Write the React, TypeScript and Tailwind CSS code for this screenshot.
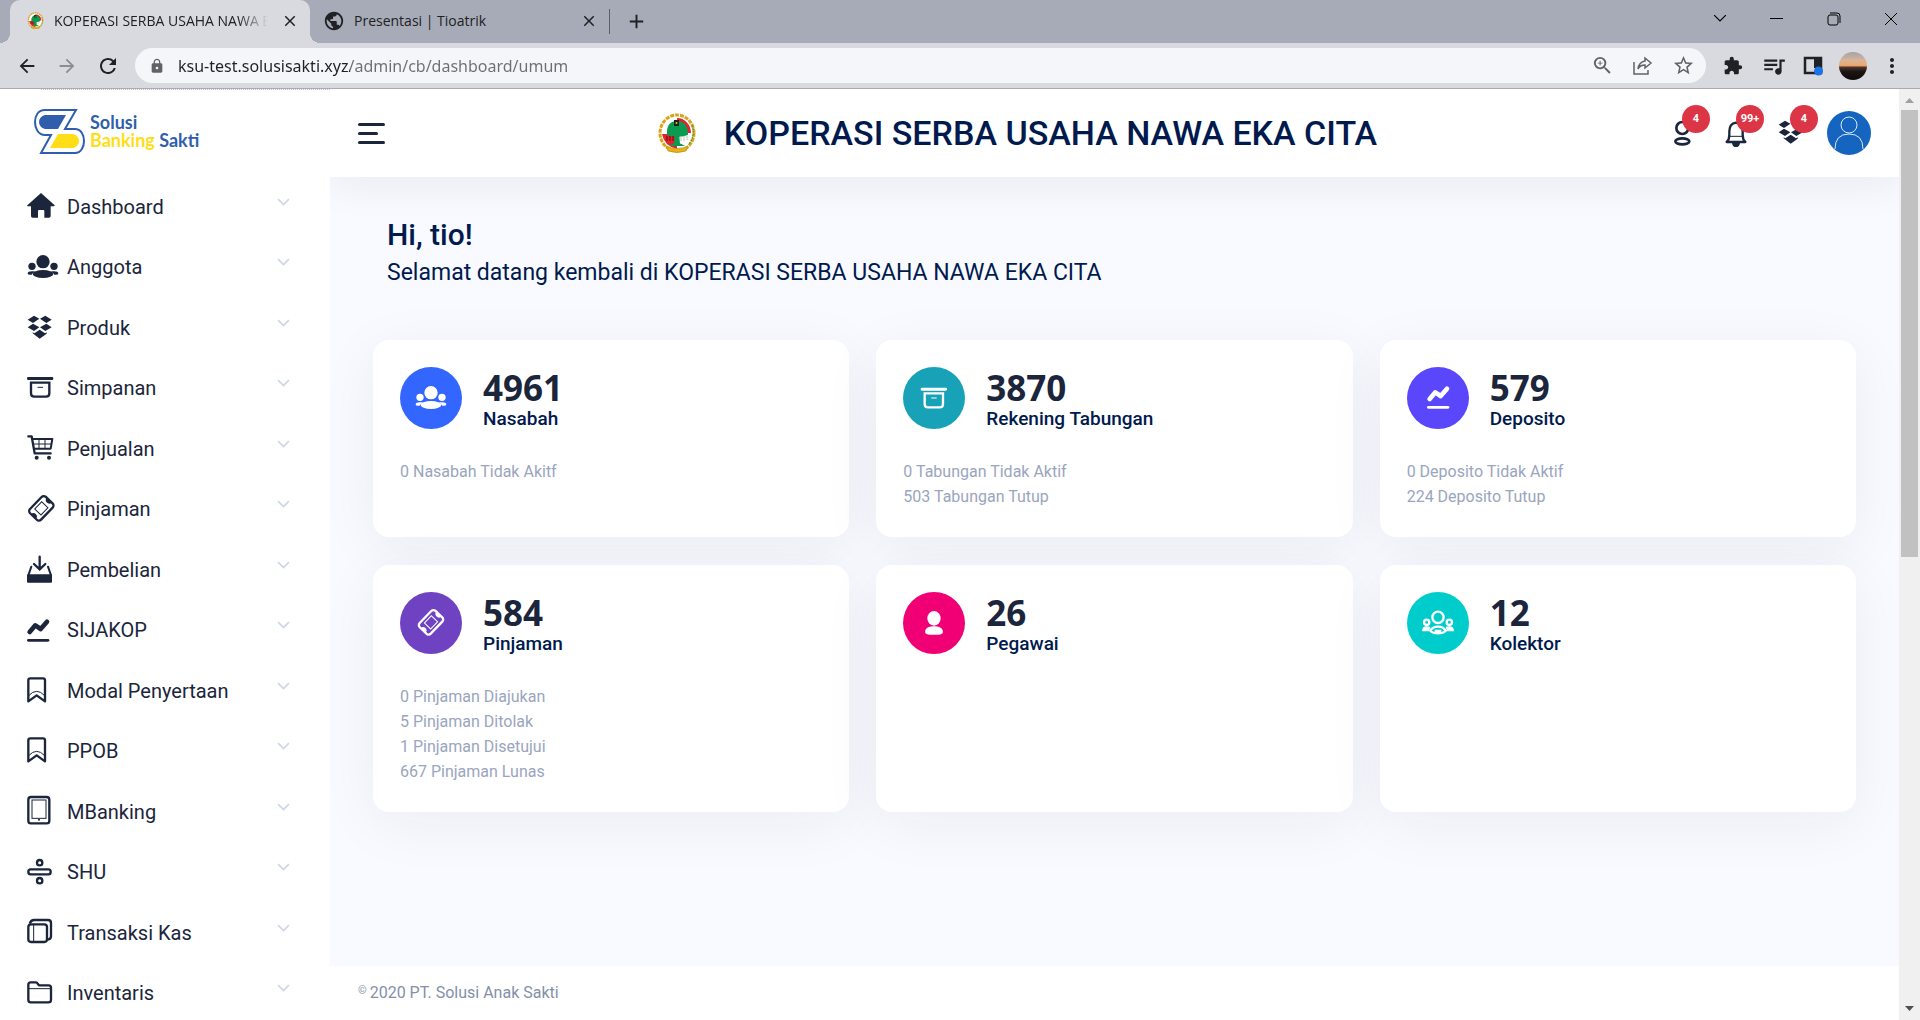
import React from 'react';
import type { ReactNode } from 'react';
import {
  MdArrowBack, MdArrowForward, MdRefresh, MdLock, MdZoomIn, MdStarBorder, MdExtension,
  MdQueueMusic, MdMoreVert, MdPublic, MdClose, MdAdd,
} from 'react-icons/md';

/* ---------- Icon shapes, drawn around a horizontal axis at y = 0 ---------- */

const home = (
  <path fill="currentColor" d="M42-42 83-5Q84-2 80-2H71V27Q71 32 66 32H52V12Q52 9 49 9H36Q33 9 33 12V32H17Q12 32 12 27V-2H3Q-1-2 1-5Z" />
);
const people = (
  <g fill="currentColor">
    <circle cx="48" cy="-16" r="20" />
    <circle cx="15" cy="-2" r="11" />
    <circle cx="81" cy="-2" r="11" />
    <ellipse cx="48" cy="21" rx="31" ry="12" />
    <path d="M2 20Q2 13 15 13Q22 12 26 14Q16 17 14 23Q2 24 2 20ZM94 20Q94 13 81 13Q74 12 70 14Q80 17 82 23Q94 24 94 20Z" />
  </g>
);
const boxes = (
  <path fill="currentColor" d="M2-25 21-37 37-28 18-15ZM39-28 55-37 74-25 58-15ZM2-2 18-13 37-2 21 9ZM39-2 58-13 74-2 55 9ZM17 16V13L22 16 38 5 54 16 59 13V17L38 32Z" />
);
const archive = (
  <g fill="none" stroke="currentColor">
    <rect x="0" y="-33" width="79" height="9" rx="4" fill="currentColor" stroke="none" />
    <path strokeWidth="7" d="M12-16H67V16Q67 26 57 26H22Q12 26 12 16Z" />
    <path strokeWidth="3" strokeLinecap="round" d="M33-2H47" />
  </g>
);
const cart = (
  <g fill="none" stroke="currentColor" strokeLinecap="round" strokeLinejoin="round">
    <path strokeWidth="7" d="M4-38H14L23 13H71" />
    <path strokeWidth="6" d="M16-30H76L71-1H21" />
    <path strokeWidth="3" d="M20-15H72M36-28V-3M54-28V-3" />
    <circle cx="29" cy="26" r="6" fill="currentColor" stroke="none" />
    <circle cx="66" cy="26" r="6" fill="currentColor" stroke="none" />
  </g>
);
const ticket = (
  <g fill="none" stroke="currentColor" transform="rotate(-46 43 -2)">
    <rect x="9" y="-25" width="68" height="46" rx="9" strokeWidth="7" />
    <rect x="28" y="-15" width="30" height="26" strokeWidth="3" />
    <path fill="currentColor" stroke="none" d="M9-12A10 10 0 0 1 9 8ZM77-12A10 10 0 0 0 77 8Z" />
  </g>
);
const inbox = (
  <g fill="none" stroke="currentColor" strokeLinecap="round">
    <path strokeWidth="7" d="M38-40V-4M21-18 38-2 55-18" />
    <path strokeWidth="6" d="M13-10 4 16M63-10 72 16" />
    <rect x="0" y="13" width="75" height="25" rx="3" fill="currentColor" stroke="none" />
  </g>
);
const trend = (
  <g fill="none" stroke="currentColor" strokeLinecap="round" strokeLinejoin="round">
    <path strokeWidth="14" d="M8 6 25-14 41-3 60-25" />
    <path strokeWidth="8" d="M4 31H63" />
  </g>
);
const bookmark = (
  <g fill="none" stroke="currentColor" strokeLinejoin="round">
    <path strokeWidth="7" d="M4 31V-32Q4-38 10-38H48Q54-38 54-32V31L29 13Z" />
    <path strokeWidth="3" d="M5 14Q29-12 53 14" />
  </g>
);
const tablet = (
  <g fill="none" stroke="currentColor">
    <rect x="4" y="-45" width="63" height="79" rx="8" strokeWidth="7" />
    <rect x="15" y="-36" width="42" height="55" strokeWidth="3" />
    <circle cx="36" cy="23" r="3" fill="currentColor" stroke="none" />
  </g>
);
const divide = (
  <g fill="none" stroke="currentColor" strokeWidth="7">
    <circle cx="38" cy="-28" r="8" />
    <circle cx="38" cy="26" r="8" />
    <rect x="4" y="-8" width="67" height="15" rx="7" />
  </g>
);
const notebook = (
  <g fill="none" stroke="currentColor" strokeWidth="7">
    <rect x="4" y="-26" width="56" height="53" rx="8" />
    <path d="M8-28Q12-39 21-39H63Q72-39 72-30V10Q72 19 62 20" />
    <path strokeWidth="3" d="M20-24V24" />
  </g>
);
const folder = (
  <g fill="none" stroke="currentColor" strokeLinejoin="round">
    <path strokeWidth="7" d="M4-25Q4-32 11-32H27Q30-32 32-28L36-23H65Q72-23 72-16V20Q72 28 64 28H12Q4 28 4 20Z" />
    <path strokeWidth="3" d="M5-13H71" />
  </g>
);
const person = (
  <g fill="currentColor">
    <ellipse cx="24" cy="-16" rx="20" ry="22" />
    <path d="M-2 20Q2 8 24 8Q46 8 50 20Q54 33 38 33H10Q-6 33-2 20Z" />
  </g>
);
const personOutline = (
  <g fill="none" stroke="currentColor" strokeWidth="8">
    <circle cx="25" cy="-15" r="18" />
    <ellipse cx="25" cy="25" rx="21" ry="9" />
  </g>
);
const peopleOutline = (
  <g fill="none" stroke="currentColor" strokeWidth="7">
    <circle cx="48" cy="-17" r="17" />
    <circle cx="14" cy="-2" r="8" />
    <circle cx="82" cy="-2" r="8" />
    <path d="M25 23Q32 11 48 11Q64 11 71 23Q64 31 48 31Q32 31 25 23ZM38 24H58" />
    <path d="M24 15Q4 10 4 21H22M72 15Q92 10 92 21H74" />
  </g>
);
const bell = (
  <g fill="none" stroke="currentColor" strokeLinejoin="round">
    <path strokeWidth="7" d="M4 27Q12 20 12 5V-5Q12-28 32-31Q52-28 52-5V5Q52 20 60 27Z" />
    <path strokeWidth="3" d="M12 10H52" />
    <path strokeWidth="4" fill="currentColor" d="M22 30Q24 40 32 40Q40 40 42 30Z" />
  </g>
);

const Glyph = ({ children, cx = 48, cy = 0 }: { children: ReactNode; cx?: number; cy?: number }) => (
  <svg viewBox={`${cx - 48} ${cy - 48} 96 96`} className="size-8 shrink-0 overflow-visible" aria-hidden="true">
    {children}
  </svg>
);

const Chevron = ({ className }: { className: string }) => (
  <svg viewBox="0 0 12 8" className={className} fill="none" stroke="currentColor" aria-hidden="true">
    <path d="M1 1l5 5 5-5" />
  </svg>
);

const Emblem = ({ className }: { className: string }) => (
  <svg viewBox="0 0 38 40" className={className} aria-hidden="true">
    <ellipse cx="19" cy="20" rx="17" ry="18" fill="#fff" stroke="#d9a520" strokeWidth="3" strokeDasharray="4 1" />
    <path d="M19 5A14 15 0 0 1 33 20H19Z" fill="#e0242b" />
    <path d="M4 21H19V36Q6 33 4 21Z" fill="#e0242b" />
    <path d="M9 22Q8 8 19 8T30 22Q24 24 19 24T9 22Z" fill="#0a9b50" />
    <path d="M9 23v5M12 23v5M15 23v5" stroke="#a5141c" strokeWidth="2" />
    <path d="M23 23v5M26 23v5M29 23v4" stroke="#b9c4bd" />
    <path d="M17 20h4l1 11h-6z" fill="#0a9b50" />
    <path d="M11 33q8-6 16 0z" fill="#0a9b50" />
    <rect x="16" y="7" width="5" height="6" fill="#16241c" />
    <circle cx="18.500" cy="10" r="1" fill="#f2c317" />
    <path d="M8 33q11 5 22 0l-2 5q-9 3-18 0z" fill="#e3b21c" stroke="#b98a10" strokeWidth=".6" />
    <path d="M34 12q4 10-3 19" stroke="#6d9b2c" strokeWidth="1.500" fill="none" strokeDasharray="2 1" />
  </svg>
);

/* ---------- Browser chrome ---------- */

const TabStrip = () => (
  <div className="flex h-[43px] items-end bg-[#a7abb8] pl-[10px] text-[14px] text-[#202124]">
    <div className="relative flex h-full w-[300px] items-center rounded-t-[10px] bg-[#d8dae0] pb-[2px] pr-[11px] pl-[17px]">
      <span className="absolute bottom-0 -left-[10px] size-[10px] bg-[radial-gradient(circle_at_0_0,transparent_10px,#d8dae0_10px)]" />
      <span className="absolute -right-[10px] bottom-0 size-[10px] bg-[radial-gradient(circle_at_100%_0,transparent_10px,#d8dae0_10px)]" />
      <Emblem className="size-[17px] shrink-0" />
      <button className="ml-[10px] w-[214px] overflow-hidden text-left whitespace-nowrap [mask-image:linear-gradient(90deg,#000_86%,transparent)]">
        KOPERASI SERBA USAHA NAWA EKA CITA
      </button>
      <button aria-label="Close tab" className="ml-auto"><MdClose className="size-[18px]" /></button>
    </div>
    <div className="flex h-full w-[297px] items-center pb-[2px] pr-[9px] pl-[13px]">
      <MdPublic className="size-[22px]" />
      <button className="ml-[9px] text-left whitespace-nowrap">Presentasi | Tioatrik</button>
      <button aria-label="Close tab" className="ml-auto"><MdClose className="size-[18px]" /></button>
    </div>
    <span className="mb-[9px] ml-[2px] h-[25px] w-px bg-[#5c5f6b]" />
    <button aria-label="New tab" className="mb-[10px] ml-[15px]"><MdAdd className="size-[23px]" /></button>
    <div className="ml-auto flex h-full items-center pr-px pb-[6px] text-black">
      <button aria-label="Search tabs" className="flex w-[57px] justify-center"><Chevron className="w-[14px]" /></button>
      <button aria-label="Minimize" className="flex w-[57px] justify-center"><span className="h-px w-[13px] bg-black" /></button>
      <button aria-label="Restore" className="flex w-[57px] justify-center">
        <svg viewBox="0 0 14 14" className="size-[14px]" fill="none" stroke="currentColor">
          <rect x="1" y="3" width="10" height="10" rx="2" />
          <path d="M3 1h7q3 0 3 3v7" />
        </svg>
      </button>
      <button aria-label="Close" className="flex w-[57px] justify-center">
        <svg viewBox="0 0 14 14" className="size-[14px]" fill="none" stroke="currentColor"><path d="M1 1l12 12M13 1 1 13" /></svg>
      </button>
    </div>
  </div>
);

const Toolbar = () => (
  <div className="flex h-[46px] items-center border-b border-[#a9abb1] bg-[#d8dae0] px-[16px] text-[#202124]">
    <button aria-label="Back"><MdArrowBack className="size-[22px]" /></button>
    <button aria-label="Forward" className="ml-[18px] text-[#8b8d93]"><MdArrowForward className="size-[22px]" /></button>
    <button aria-label="Reload" className="ml-[18px]"><MdRefresh className="size-6" /></button>
    <div className="ml-[15px] flex h-[35px] flex-1 items-center rounded-full bg-[#f5f6f9] pr-[11px] pl-[14px] text-[#5f6368]">
      <MdLock className="size-4" />
      <input
        aria-label="Address"
        defaultValue="ksu-test.solusisakti.xyz/admin/cb/dashboard/umum"
        className="ml-[13px] min-w-0 flex-1 bg-[linear-gradient(90deg,#202124_172px,#6b6e74_172px)] bg-clip-text font-['Noto_Sans',sans-serif] text-[16px] text-transparent outline-none"
      />
      <button aria-label="Zoom"><MdZoomIn className="size-[23px]" /></button>
      <button aria-label="Share" className="ml-[19px]">
        <svg viewBox="0 0 20 20" className="size-5" fill="none" stroke="currentColor" strokeWidth="1.500">
          <path d="M1 6v12h14v-4M12 2l6 5-6 5V9Q7 9 5 13Q6 6 12 5Z" />
        </svg>
      </button>
      <button aria-label="Bookmark" className="ml-[19px]"><MdStarBorder className="size-[23px]" /></button>
    </div>
    <button aria-label="Extensions" className="ml-[17px]"><MdExtension className="size-[20px]" /></button>
    <button aria-label="Media" className="ml-[18px]"><MdQueueMusic className="size-[26px]" /></button>
    <button aria-label="Side panel" className="ml-[16px]">
      <svg viewBox="0 0 20 20" className="size-5">
        <path d="M2 2h16v15H2z" fill="none" stroke="currentColor" strokeWidth="2.500" />
        <path d="M11 2h8v10h-8z" fill="currentColor" />
        <circle cx="15.500" cy="15" r="4.500" fill="#1a73e8" />
      </svg>
    </button>
    <button aria-label="Profile" className="ml-[16px] size-7 rounded-full bg-[linear-gradient(180deg,#a3a2a8_0%,#d9b59a_30%,#f0a868_48%,#4a3530_55%,#1b1512_70%,#0d0b0a_100%)]" />
    <button aria-label="Menu" className="ml-[13px]"><MdMoreVert className="size-[24px]" /></button>
  </div>
);

/* ---------- Application ---------- */

const menu: { label: string; icon: ReactNode }[] = [
  { label: 'Dashboard', icon: home },
  { label: 'Anggota', icon: people },
  { label: 'Produk', icon: boxes },
  { label: 'Simpanan', icon: archive },
  { label: 'Penjualan', icon: cart },
  { label: 'Pinjaman', icon: ticket },
  { label: 'Pembelian', icon: inbox },
  { label: 'SIJAKOP', icon: trend },
  { label: 'Modal Penyertaan', icon: bookmark },
  { label: 'PPOB', icon: bookmark },
  { label: 'MBanking', icon: tablet },
  { label: 'SHU', icon: divide },
  { label: 'Transaksi Kas', icon: notebook },
  { label: 'Inventaris', icon: folder },
];

const Sidebar = () => (
  <aside className="flex w-[330px] shrink-0 flex-col overflow-hidden bg-white">
    <div className="ml-[41px] border-t border-dotted border-[#c4c4c8]" />
    <a href="#" className="flex h-[86px] shrink-0 items-center pb-[4px] pl-[33px]">
      <svg viewBox="0 0 53 47" className="h-[47px] w-[53px]" aria-hidden="true">
        <path fill="none" stroke="#2f5fac" strokeWidth="2" d="M43 2H12C5 2 2 8 2 14S5 27 12 27H18L8 45H42C48 45 51 39 51 33S48 21 42 21H32Z" />
        <path fill="#2f5fac" d="M33 7H12C4 9 4 19 12 21H25Z" />
        <path fill="#ffde17" d="M25 26H40C48 28 48 38 40 40H17Z" />
      </svg>
      <span className="ml-[4px] font-['Lato',sans-serif] text-[18px] leading-[18px] font-bold text-[#2f5fac]">
        Solusi<br /><span className="text-[#ffde17]">Banking</span> Sakti
      </span>
    </a>
    <nav>
      <ul>
        {menu.map(({ label, icon }) => (
          <li key={label} className="h-[60px] odd:h-[61px]">
            <a href="#" className="flex h-full items-center pr-[40px] pl-[27px] text-[20px] text-[#1b253b]">
              <Glyph>{icon}</Glyph>
              <span className="ml-[8px] flex-1">{label}</span>
              <Chevron className="mb-[9px] w-[13px] stroke-[1.5] text-[#cdd6e4]" />
            </a>
          </li>
        ))}
      </ul>
    </nav>
  </aside>
);

const HeaderButton = ({ label, count, children }: { label: string; count: string; children: ReactNode }) => (
  <button aria-label={label} className="relative text-[#1b253b]">
    {children}
    <span className="absolute -top-[12px] left-[12px] flex size-7 items-center justify-center rounded-full bg-[#dc3545] text-[11px] font-bold text-white">
      {count}
    </span>
  </button>
);

const Header = () => (
  <header className="relative flex h-[88px] shrink-0 items-center justify-between bg-white px-[28px] shadow-[0_8px_40px_rgba(30,32,60,0.07)]">
    <button aria-label="Toggle menu" className="flex w-[27px] flex-col gap-[6px]">
      <span className="h-[3px] rounded-full bg-[#1b253b]" />
      <span className="h-[3px] w-5 rounded-full bg-[#1b253b]" />
      <span className="h-[3px] rounded-full bg-[#1b253b]" />
    </button>
    <div className="flex items-center pr-[20px]">
      <Emblem className="h-10 w-[38px]" />
      <h1 className="ml-[28px] text-[34px] leading-10 font-medium whitespace-nowrap text-[#001a4e]">KOPERASI SERBA USAHA NAWA EKA CITA</h1>
    </div>
    <div className="flex items-center">
      <div className="flex gap-[22px]">
        <HeaderButton label="Members" count="4"><Glyph cx={36}>{personOutline}</Glyph></HeaderButton>
        <HeaderButton label="Notifications" count="99+"><Glyph cx={44}>{bell}</Glyph></HeaderButton>
        <HeaderButton label="Products" count="4"><Glyph>{boxes}</Glyph></HeaderButton>
      </div>
      <button aria-label="Account" className="ml-[17px] size-11 overflow-hidden rounded-full bg-[#1565c0]">
        <svg viewBox="0 0 44 44" fill="none" stroke="#dbe8f7">
          <circle cx="22" cy="14" r="8" />
          <path d="M8 38Q8 23 22 23T36 38" />
        </svg>
      </button>
    </div>
  </header>
);

type Stat = { value: string; label: string; tint: string; icon: ReactNode; cx: number; cy: number; notes: string[] };

const stats: Stat[] = [
  { value: '4961', label: 'Nasabah', tint: 'bg-[#3366ff]', icon: people, cx: 48, cy: 0, notes: ['0 Nasabah Tidak Akitf'] },
  { value: '3870', label: 'Rekening Tabungan', tint: 'bg-[#17a2b8]', icon: archive, cx: 40, cy: -2, notes: ['0 Tabungan Tidak Aktif', '503 Tabungan Tutup'] },
  { value: '579', label: 'Deposito', tint: 'bg-[#5b47fb]', icon: trend, cx: 33, cy: 3, notes: ['0 Deposito Tidak Aktif', '224 Deposito Tutup'] },
  { value: '584', label: 'Pinjaman', tint: 'bg-[#6f42c1]', icon: ticket, cx: 43, cy: 0, notes: ['0 Pinjaman Diajukan', '5 Pinjaman Ditolak', '1 Pinjaman Disetujui', '667 Pinjaman Lunas'] },
  { value: '26', label: 'Pegawai', tint: 'bg-[#f10075]', icon: person, cx: 24, cy: -2, notes: [] },
  { value: '12', label: 'Kolektor', tint: 'bg-[#00cccc]', icon: peopleOutline, cx: 48, cy: 0, notes: [] },
];

const StatCard = ({ value, label, tint, icon, cx, cy, notes }: Stat) => (
  <section className="rounded-2xl bg-white p-[27px] pb-[28px] shadow-[0_12px_60px_rgba(30,32,60,0.06)]">
    <div className="flex h-[62px] gap-[21px]">
      <div className={`flex size-[62px] items-center justify-center rounded-full text-white ${tint}`}>
        <Glyph cx={cx} cy={cy}>{icon}</Glyph>
      </div>
      <div>
        <p className="pt-[2px] font-['Open_Sans',sans-serif] text-[35px] leading-[38px] font-bold text-[#1b253b]">{value}</p>
        <h3 className="text-[19px] leading-6 font-medium text-[#001a4e]">{label}</h3>
      </div>
    </div>
    <ul className="mt-[30px] text-[16px] leading-[25px] text-[#9aa5be]">
      {notes.map((note) => <li key={note}>{note}</li>)}
    </ul>
  </section>
);

const ScrollBar = () => (
  <div className="flex w-[21px] shrink-0 flex-col items-center bg-[#f0f0f0] py-[9px]" aria-hidden="true">
    <svg viewBox="0 0 9 5" className="w-[9px]"><path d="M0 5 4.500 0 9 5z" fill="#a0a0a0" /></svg>
    <span className="mt-[7px] h-[49%] w-[17px] bg-[#c1c1c1]" />
    <svg viewBox="0 0 9 5" className="mt-auto w-[9px]"><path d="M0 0 4.500 5 9 0z" fill="#505050" /></svg>
  </div>
);

export default function App() {
  return (
    <div className="flex h-screen flex-col overflow-hidden font-['Roboto',sans-serif]">
      <div className="shrink-0 font-['Open_Sans','Noto_Sans',sans-serif]">
        <TabStrip />
        <Toolbar />
      </div>
      <div className="flex min-h-0 flex-1">
        <Sidebar />
        <div className="flex min-w-0 flex-1 flex-col overflow-hidden bg-[#f9faff]">
          <Header />
          <main className="flex-1 px-[43px] pt-[38px]">
            <div className="pl-[14px] text-[#001a4e]">
              <h2 className="text-[30px] leading-10 font-medium">Hi, tio!</h2>
              <p className="text-[23px] leading-9">Selamat datang kembali di KOPERASI SERBA USAHA NAWA EKA CITA</p>
            </div>
            <div className="mt-[49px] grid grid-cols-3 gap-x-[27px] gap-y-[28px]">
              {stats.map((stat) => <StatCard key={stat.label} {...stat} />)}
            </div>
          </main>
          <footer className="relative flex h-[54px] shrink-0 items-center bg-white pl-[28px] text-[16px] text-[#8490a8]">
            <span className="mb-[4px] text-[11px]">©</span>
            <span className="ml-[3px]">2020 PT. Solusi Anak Sakti</span>
          </footer>
        </div>
        <ScrollBar />
      </div>
    </div>
  );
}
